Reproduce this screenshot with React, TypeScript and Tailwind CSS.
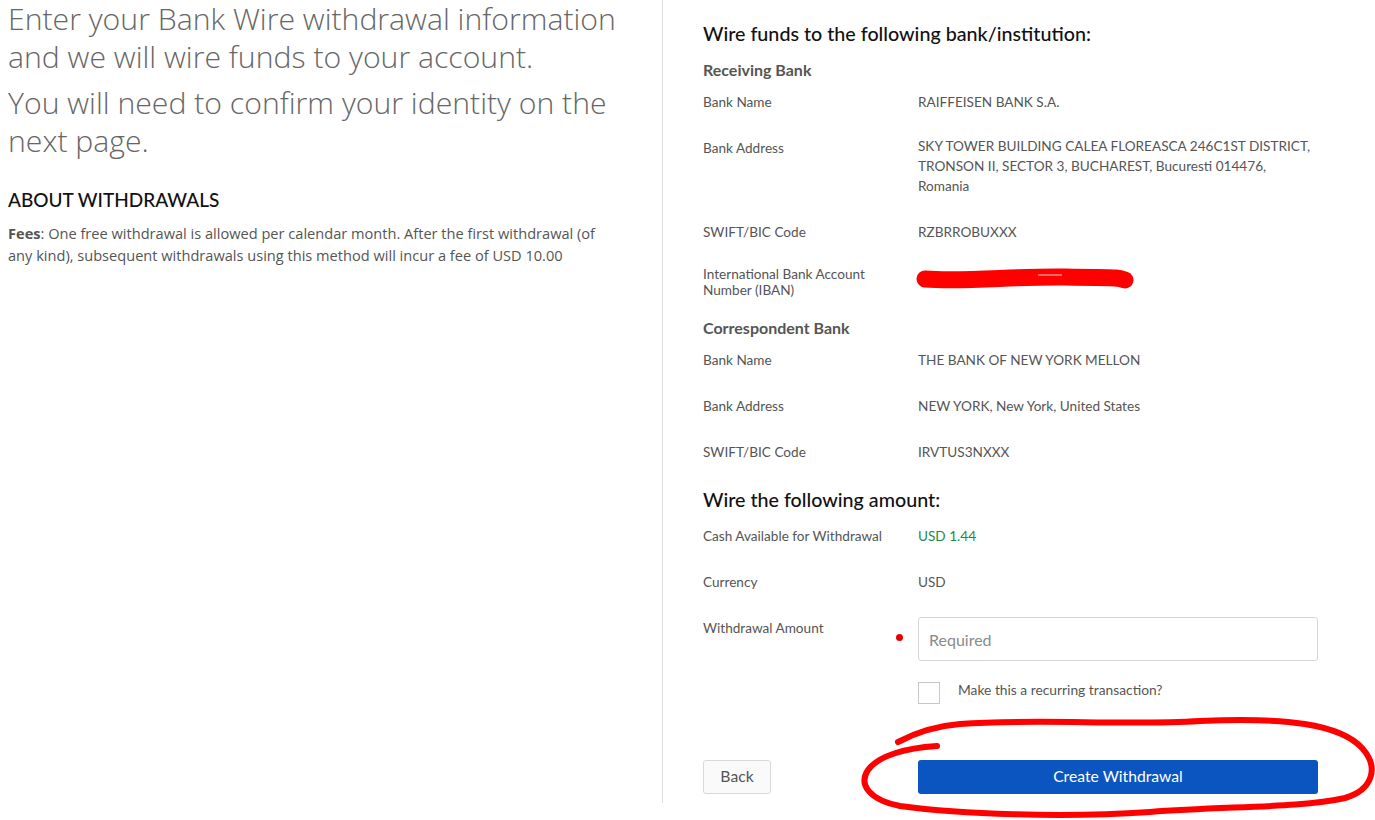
import React from "react";

const font = { fontFamily: "Lato, 'Open Sans', 'Liberation Sans', sans-serif" };
const introFont = { fontFamily: "'Open Sans', Lato, 'Liberation Sans', sans-serif" };

function Row({
  label,
  children,
  className = "",
  labelClass = "",
}: {
  label: React.ReactNode;
  children?: React.ReactNode;
  className?: string;
  labelClass?: string;
}) {
  return (
    <div className={`flex ${className}`}>
      <div className={`w-[215px] shrink-0 text-[13.6px] leading-5 text-[#555] ${labelClass}`}>{label}</div>
      <div className="flex-1 text-[13.6px] leading-5 text-[#555]">{children}</div>
    </div>
  );
}

function Redaction() {
  return (
    <svg width="220" height="28" viewBox="0 0 220 28" className="block">
      <path
        d="M9 14 C 50 17, 100 11, 150 12 S 200 12, 209 15"
        stroke="#ff0000"
        strokeWidth="17"
        strokeLinecap="round"
        fill="none"
      />
      <path d="M122 10 L 146 10" stroke="#ffd6d6" strokeWidth="1" />
    </svg>
  );
}

function Scribble() {
  return (
    <svg
      className="pointer-events-none absolute left-0 top-0"
      width="1375"
      height="820"
      viewBox="0 0 1375 820"
    >
      <path
        d="M898 742 C 915 733, 935 726, 960 724 C 1040 718, 1120 726, 1200 721 C 1285 717, 1340 724, 1362 748 C 1380 768, 1372 790, 1345 798 C 1300 808, 1230 806, 1150 812 C 1060 818, 960 814, 900 806 C 870 800, 858 785, 868 770 C 878 756, 905 748, 937 746"
        stroke="#ff0000"
        strokeWidth="6"
        strokeLinecap="round"
        strokeLinejoin="round"
        fill="none"
      />
    </svg>
  );
}

export default function App() {
  return (
    <div className="relative flex h-[820px] w-[1375px] overflow-hidden bg-white" style={font}>
      {/* Intro column */}
      <div className="w-[662px] shrink-0 pl-[8px] pr-[42px]" style={introFont}>
        <div className="text-[30.2px] font-light leading-[38px] text-[#666]">
          Enter your Bank Wire withdrawal information and we will wire funds to your account.
        </div>
        <div className="mt-[8px] text-[30.2px] font-light leading-[38px] text-[#666]">
          You will need to confirm your identity on the next page.
        </div>
        <div className="mt-[28px] text-[19px] font-medium leading-6 text-[#111]" style={font}>
          ABOUT WITHDRAWALS
        </div>
        <p className="mt-[10px] text-[14.6px] leading-[22px] text-[#555]">
          <span className="font-bold">Fees</span>: One free withdrawal is allowed per calendar month. After the first
          withdrawal (of any kind), subsequent withdrawals using this method will incur a fee of USD 10.00
        </p>
      </div>

      {/* Divider */}
      <div className="h-[803px] w-px shrink-0 bg-[#dddddd]" />

      {/* Wire details column */}
      <div className="w-[655px] shrink-0 pl-[40px]">
        <div className="mt-[21px] text-[19.7px] font-medium leading-[26px] text-[#111]">
          Wire funds to the following bank/institution:
        </div>
        <div className="mt-[13px] text-[16px] font-bold leading-5 text-[#555]">Receiving Bank</div>
        <Row label="Bank Name" className="mt-[12px]">
          RAIFFEISEN BANK S.A.
        </Row>
        <Row label="Bank Address" className="mt-[24px]" labelClass="pt-[2px]">
          <div className="w-[395px]">
            SKY TOWER BUILDING CALEA FLOREASCA 246C1ST DISTRICT, TRONSON II, SECTOR 3, BUCHAREST, Bucuresti 014476,
            Romania
          </div>
        </Row>
        <Row label="SWIFT/BIC Code" className="mt-[26px]">
          RZBRROBUXXX
        </Row>
        <Row label={<span className="block leading-4">International Bank Account<br />Number (IBAN)</span>} className="mt-[24px]">
          <div className="-ml-[2px] -mt-[1px]">
            <Redaction />
          </div>
        </Row>
        <div className="mt-[20px] text-[16px] font-bold leading-5 text-[#555]">Correspondent Bank</div>
        <Row label="Bank Name" className="mt-[12px]">
          THE BANK OF NEW YORK MELLON
        </Row>
        <Row label="Bank Address" className="mt-[26px]">
          NEW YORK, New York, United States
        </Row>
        <Row label="SWIFT/BIC Code" className="mt-[26px]">
          IRVTUS3NXXX
        </Row>

        <div className="mt-[25px] text-[19.7px] font-medium leading-[26px] text-[#111]">Wire the following amount:</div>
        <Row label="Cash Available for Withdrawal" className="mt-[13px]">
          <span className="text-[#1e8a44]">USD 1.44</span>
        </Row>
        <Row label="Currency" className="mt-[26px]">
          USD
        </Row>
        <div className="mt-[25px] flex">
          <div className="relative w-[215px] shrink-0 pt-[1px] text-[13.6px] leading-5 text-[#555]">
            Withdrawal Amount
            <span className="absolute left-[193px] top-[17px] h-[7px] w-[7px] rounded-full bg-[#e60000]" />
          </div>
          <input
            placeholder="Required"
            className="h-[44px] w-[400px] rounded-[3px] border border-[#d6d6d6] px-[10px] text-[16px] text-[#555] outline-none placeholder:text-[#8a8a8a]"
          />
        </div>
        <div className="mt-[21px] flex items-center pl-[215px]">
          <span className="h-[22px] w-[22px] border border-[#c8c8c8] bg-white" />
          <span className="ml-[18px] -mt-[6px] text-[13.8px] leading-5 text-[#555]">
            Make this a recurring transaction?
          </span>
        </div>
        <div className="mt-[56px] flex items-center">
          <div className="w-[215px] shrink-0">
            <button className="h-[34px] w-[68px] rounded-[3px] border border-[#d9d9d9] bg-[#fafafa] text-[15.7px] text-[#555]">
              Back
            </button>
          </div>
          <button className="h-[34px] w-[400px] rounded-[3px] bg-[#0b55c0] text-[15.7px] text-white">
            Create Withdrawal
          </button>
        </div>
      </div>

      <Scribble />
    </div>
  );
}
